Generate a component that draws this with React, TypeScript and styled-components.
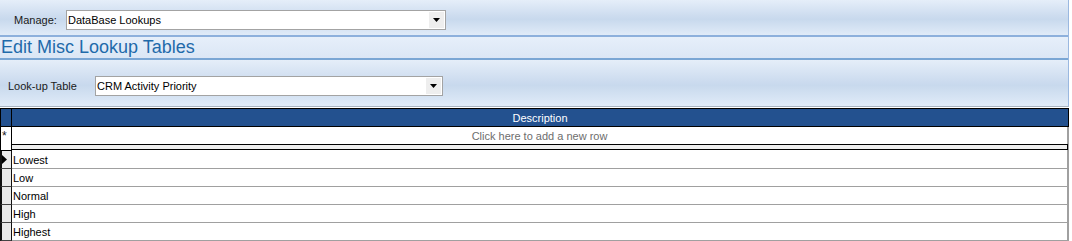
import React from "react";
import styled, { createGlobalStyle } from "styled-components";

const Global = createGlobalStyle`
  html, body { margin: 0; padding: 0; background: #ffffff; }
  body { font-family: "Liberation Sans", Arial, sans-serif; font-size: 11px; color: #1a1a1a; }
`;

const Page = styled.div`
  width: 1069px;
  display: flex;
  flex-direction: column;
`;

const Band = styled.div<{ $h: number; $pad: number; $top: number }>`
  height: ${(p) => p.$h}px;
  box-sizing: border-box;
  padding-left: ${(p) => p.$pad}px;
  padding-top: ${(p) => p.$top}px;
  display: flex;
  align-items: flex-start;
  border-right: 1px solid #9ab8e0;
  background: linear-gradient(
    to bottom,
    #e5eef9 0%,
    #cddcef 45%,
    #c8d9ed 55%,
    #e0ebf8 100%
  );
`;

const TitleBand = styled.div`
  height: 21px;
  display: flex;
  align-items: center;
  padding-left: 1px;
  border-right: 1px solid #9ab8e0;
  background: linear-gradient(to bottom, #e6effa 0%, #dbe6f5 100%);
`;

const Title = styled.div`
  font-size: 18px;
  color: #1f6aaa;
  line-height: 21px;
`;

const Rule = styled.div<{ $c: string }>`
  height: 2px;
  background: ${(p) => p.$c};
  border-right: 1px solid #9ab8e0;
`;

const Label = styled.span<{ $w: number }>`
  width: ${(p) => p.$w}px;
  font-size: 11px;
  line-height: 20px;
  color: #1a1a1a;
`;

const Select = styled.div<{ $w: number }>`
  width: ${(p) => p.$w}px;
  height: 20px;
  box-sizing: border-box;
  border: 1px solid #a3a3a3;
  background: #fff;
  display: flex;
  align-items: center;
  padding-left: 1px;
`;

const SelectText = styled.span`
  flex: 1;
  font-size: 11px;
  color: #000;
`;

const DropButton = styled.span`
  width: 15px;
  height: 16px;
  margin-right: 1px;
  background: #eeeeee;
  display: flex;
  align-items: center;
  justify-content: center;
`;

const Arrow = () => (
  <svg width="7" height="4" viewBox="0 0 7 4">
    <path d="M0 0 H7 L3.5 4 Z" fill="#000" />
  </svg>
);

const GridWrap = styled.div`
  border-top: 1px solid #a8b4c2;
  padding-top: 1px;
  background: #fff;
`;

const Grid = styled.div`
  width: 1069px;
  display: grid;
  grid-template-columns: 12px 1fr;
`;

const HeadSel = styled.div`
  height: 17px;
  background: #23518f;
  border: 1px solid #000;
  box-sizing: content-box;
`;

const HeadCell = styled.div`
  height: 17px;
  background: #23518f;
  border-top: 1px solid #000;
  border-bottom: 1px solid #000;
  border-right: 1px solid #000;
  color: #fff;
  font-size: 11px;
  display: flex;
  align-items: center;
  justify-content: center;
`;

const NewSel = styled.div`
  border-left: 1px solid #000;
  border-right: 1px solid #000;
  border-bottom: 1px solid #000;
  background: #fff;
  font-size: 12px;
  padding-top: 2px;
  padding-left: 1px;
  box-sizing: border-box;
  height: 24px;
`;

const NewCell = styled.div`
  display: flex;
  flex-direction: column;
  border-right: 2px solid #a0a0a0;
`;

const NewText = styled.div`
  height: 17px;
  display: flex;
  align-items: center;
  justify-content: center;
  color: #6d6d6d;
  font-size: 11px;
`;

const Splitter = styled.div`
  height: 4px;
  border: 1px solid #000;
  border-left: none;
  background: #eeeeee;
  margin-right: -1px;
`;

const RowSel = styled.div`
  height: 17px;
  width: 9px;
  border-left: 2px solid #111;
  border-right: 1px solid #111;
  border-bottom: 1px solid #444;
  background: #ebebeb;
  display: flex;
  align-items: center;
  box-sizing: content-box;
`;

const RowCell = styled.div`
  height: 17px;
  border-bottom: 1px solid #a0a0a0;
  border-right: 2px solid #a0a0a0;
  display: flex;
  align-items: center;
  padding-left: 1px;
  font-size: 11px;
  color: #000;
`;

const rows = ["Lowest", "Low", "Normal", "High", "Highest"];

export default function App() {
  return (
    <>
      <Global />
      <Page>
        <Band $h={35} $pad={14} $top={10}>
          <Label $w={52}>Manage:</Label>
          <Select $w={380}>
            <SelectText>DataBase Lookups</SelectText>
            <DropButton>
              <Arrow />
            </DropButton>
          </Select>
        </Band>
        <Rule $c="#8db0dc" />
        <TitleBand>
          <Title>Edit Misc Lookup Tables</Title>
        </TitleBand>
        <Rule $c="#7aa6d4" />
        <Band $h={46} $pad={8} $top={16}>
          <Label $w={87}>Look-up Table</Label>
          <Select $w={348}>
            <SelectText>CRM Activity Priority</SelectText>
            <DropButton>
              <Arrow />
            </DropButton>
          </Select>
        </Band>
        <GridWrap>
          <Grid>
            <HeadSel />
            <HeadCell>Description</HeadCell>
            <NewSel>*</NewSel>
            <NewCell>
              <NewText>Click here to add a new row</NewText>
              <Splitter />
            </NewCell>
            {rows.map((r, i) => (
              <React.Fragment key={r}>
                <RowSel>
                  {i === 0 && (
                    <svg width="5" height="9" viewBox="0 0 5 9">
                      <path d="M0 0 L5 4.5 L0 9 Z" fill="#000" />
                    </svg>
                  )}
                </RowSel>
                <RowCell>{r}</RowCell>
              </React.Fragment>
            ))}
          </Grid>
        </GridWrap>
      </Page>
    </>
  );
}
